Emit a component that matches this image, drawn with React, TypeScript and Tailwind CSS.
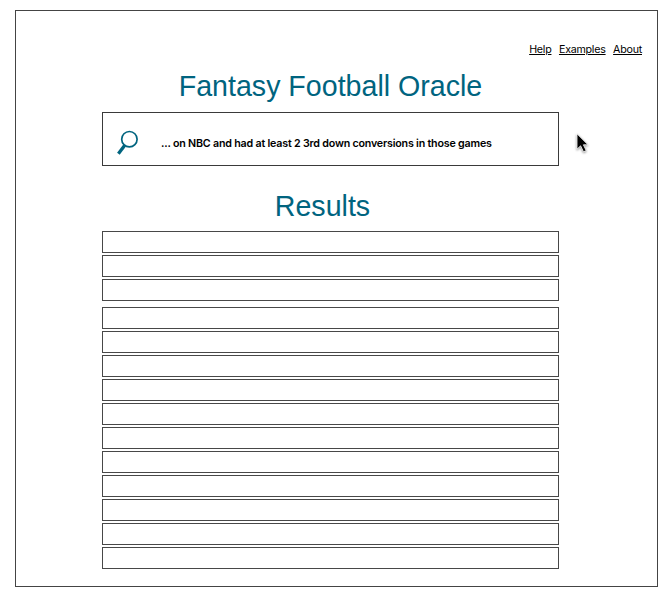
const resultGroups = [3, 11];

function SearchIcon() {
  return (
    <svg width="24" height="28" viewBox="0 0 24 28" fill="none" stroke="#00647f" className="shrink-0">
      <circle cx="14.4" cy="10.2" r="7.7" strokeWidth="1.7" />
      <path d="M9.6 16.6 L3.4 24.8" strokeWidth="3.3" />
    </svg>
  );
}

function Cursor() {
  return (
    <svg
      width="20"
      height="28"
      viewBox="0 0 20 28"
      className="absolute left-[572px] top-[129px] drop-shadow-[0_1px_1px_rgba(0,0,0,0.45)]"
    >
      <path
        d="M5 4.8 V20.2 L8.6 16.8 L11.5 22.8 L14.2 21.6 L11.4 15.8 H16 Z"
        fill="#000"
        stroke="#fff"
        strokeWidth="0.8"
      />
    </svg>
  );
}

export default function App() {
  return (
    <div className="relative h-[600px] w-[672px] overflow-hidden bg-white pl-[15px] pt-[10px] font-['Inter',sans-serif] text-black">
      <main className="h-[577px] w-[643px] border border-[#444] pl-[86px]">
        <nav className="-ml-[86px] flex h-[59px] justify-end gap-[7.5px] pr-[15px] pt-[31px] text-[10.7px] leading-[16px] tracking-[-0.25px]">
          <a className="underline">Help</a>
          <a className="underline">Examples</a>
          <a className="underline">About</a>
        </nav>
        <h1 className="h-[42px] w-[457px] text-center font-['Liberation_Sans',Arial,sans-serif] text-[28.6px] leading-[33px] text-[#00647f]">
          Fantasy Football Oracle
        </h1>
        <div className="flex h-[54px] w-[457px] items-center border border-[#3a3a3a] pl-[12px] pt-[8px]">
          <SearchIcon />
          <span className="ml-[22px] mt-[2px] whitespace-nowrap text-[10.7px] font-semibold tracking-[-0.2px]">
            ... on NBC and had at least 2 3rd down conversions in those games
          </span>
        </div>
        <h2 className="mt-[24px] h-[41px] w-[441px] text-center font-['Liberation_Sans',Arial,sans-serif] text-[28.6px] leading-[33px] text-[#00647f]">
          Results
        </h2>
        <div className="flex w-[457px] flex-col gap-[6px]">
          {resultGroups.map((count, group) => (
            <div key={group} className="flex flex-col gap-[2px]">
              {Array.from({ length: count }, (_, row) => (
                <div key={row} className="h-[22px] border border-[#484848]" />
              ))}
            </div>
          ))}
        </div>
      </main>
      <Cursor />
    </div>
  );
}
